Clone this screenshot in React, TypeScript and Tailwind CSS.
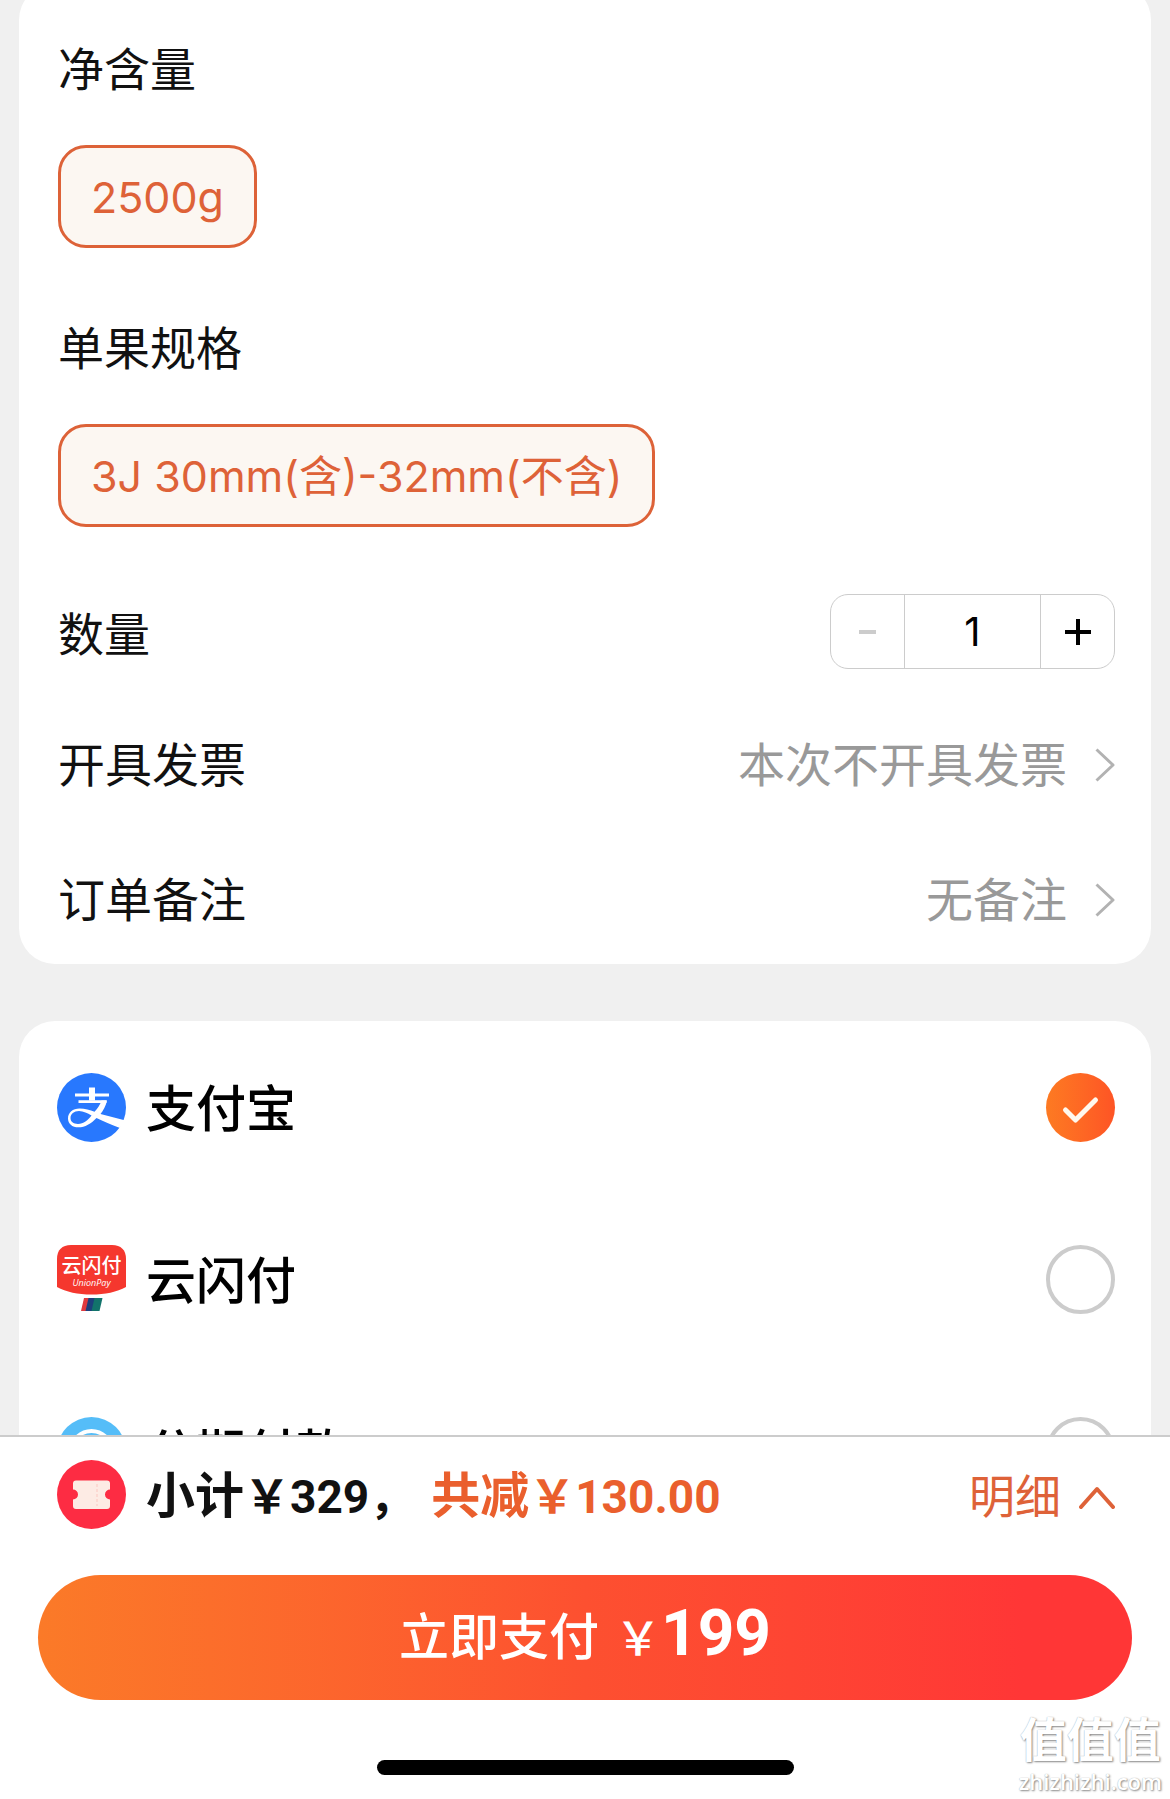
import { useState } from 'react';

const FONT = "font-[Inter,'Noto_Sans_CJK_SC',sans-serif]";
const PRICE_FONT = "font-[Roboto,'Noto_Sans_CJK_SC',sans-serif]";

function AlipayLogo() {
  return (
    <svg viewBox="0 0 69 69" className="size-[69px] shrink-0" aria-hidden="true">
      <circle cx="34.5" cy="34.5" r="34.5" fill="#2878fe" />
      <path d="M32 14.5h6v13h-6z" fill="#fff" />
      <path d="M18 20.6h34v3H18zM21.5 27.2h28v2.8h-28z" fill="#fff" />
      <path
        d="M44.5 27.5h5.500C48.800 33 46.300 37.500 43.500 41L68.500 47.500 63 55C54 51.500 46.500 48.500 39.500 45 34 50.800 28 54.300 21.500 54.300c-6.500 0-10.500-3.600-10.500-8.800 0-6 4.800-10 11.500-10 5.500 0 10.500 1.500 15 3.300C40.500 35.500 43.300 31.500 44.500 27.500zM34.500 42.500C30.500 40.300 26.500 38 22 38c-5 0-8.500 3-8.500 7 0 3.500 2.800 5.900 7.500 5.900 5.500 0 10-3.600 13.500-8.400z"
        fill="#fff"
      />
    </svg>
  );
}

function UnionPayLogo() {
  return (
    <svg viewBox="0 0 69 69" className="size-[69px] shrink-0" aria-hidden="true">
      <path d="M14 0h41c9 0 14 5 14 14v28c-9 5-21 7.500-34.500 7.500S9 47 0 42V14C0 5 5 0 14 0z" fill="#f5372e" />
      <text x="34.5" y="28" textAnchor="middle" fontSize="20" fill="#fff" fontFamily="Noto Sans CJK SC, sans-serif">
        云闪付
      </text>
      <text x="34.5" y="41" textAnchor="middle" fontSize="9" fontStyle="italic" fill="#fff" fontFamily="Open Sans, sans-serif">
        UnionPay
      </text>
      <path d="M27 53h7l-3 13h-7z" fill="#e0393e" />
      <path d="M31.5 53h8l-3 13h-8z" fill="#1d3f7c" />
      <path d="M37.5 53h8l-3 13h-8z" fill="#12736b" />
    </svg>
  );
}

function InstallmentLogo() {
  return (
    <svg viewBox="0 0 69 69" className="size-[69px] shrink-0" aria-hidden="true">
      <circle cx="34.5" cy="34.5" r="34.5" fill="#55bdf8" />
      <circle cx="34.5" cy="34.5" r="20.5" fill="none" stroke="#fff" strokeWidth="4" />
    </svg>
  );
}

function CouponLogo() {
  return (
    <svg viewBox="0 0 69 69" className="size-[69px] shrink-0" aria-hidden="true">
      <circle cx="34.5" cy="34.5" r="34.5" fill="#fd2c43" />
      <path
        d="M19 20.5h31a3 3 0 0 1 3 3v6a5 5 0 0 0 0 10v6.500a3 3 0 0 1-3 3H19a3 3 0 0 1-3-3v-6.500a5 5 0 0 0 0-10v-6a3 3 0 0 1 3-3z"
        fill="#fdebe4"
      />
      <path d="M40 24v22" stroke="#fbd3cc" strokeWidth="1.5" strokeDasharray="3 2" />
    </svg>
  );
}

function ChevronRight() {
  return (
    <svg viewBox="0 0 20 34" className="h-[34px] w-5" fill="none" stroke="#b2b2b2" strokeWidth="3" aria-hidden="true">
      <path d="M1.5 1.5 18 17 1.5 32.5" strokeLinejoin="round" />
    </svg>
  );
}

function Chip({ label }: { label: string }) {
  return (
    <button
      type="button"
      aria-pressed="true"
      className="h-[103px] rounded-[28px] border-3 border-[#dd6238] bg-[#fcf7f2] px-[30px] text-[43px] leading-[60px] text-[#de6238]"
    >
      {label}
    </button>
  );
}

function LinkRow({ label, value }: { label: string; value: string }) {
  return (
    <button type="button" className="flex w-full items-center justify-between text-[47px] leading-[60px]">
      <span>{label}</span>
      <span className="flex items-center gap-7 text-[#999]">
        {value}
        <ChevronRight />
      </span>
    </button>
  );
}

const methods = [
  { id: 'alipay', name: '支付宝', logo: <AlipayLogo /> },
  { id: 'unionpay', name: '云闪付', logo: <UnionPayLogo /> },
  { id: 'installment', name: '分期付款', logo: <InstallmentLogo /> },
];

export default function App() {
  const [count, setCount] = useState(1);
  const [method, setMethod] = useState('alipay');

  return (
    <div className={`flex h-screen flex-col bg-[#f0f0f0] text-[#111] ${FONT}`}>
      <main className="min-h-0 flex-1 overflow-hidden">
        {/* Product options */}
        <section className="mx-[19px] -mt-4 flex flex-col rounded-[36px] bg-white pt-[55px] pr-9 pb-[34px] pl-[39px]">
          <h2 className="text-[46px] leading-[60px]">净含量</h2>
          <div className="mt-[46px]">
            <Chip label="2500g" />
          </div>

          <h2 className="mt-[70px] text-[46px] leading-[60px]">单果规格</h2>
          <div className="mt-[46px]">
            <Chip label="3J 30mm(含)-32mm(不含)" />
          </div>

          <div className="mt-[67px] flex items-center justify-between">
            <label htmlFor="count" className="pt-1 text-[46px] leading-[60px]">数量</label>
            <div className="flex h-[75px] w-[285px] overflow-hidden rounded-[18px] border border-[#ccc]">
              <button
                type="button"
                aria-label="减少"
                className="flex w-[73px] items-center justify-center"
                onClick={() => setCount(Math.max(1, count - 1))}
              >
                <span className="h-1 w-[17px] bg-[#ccc]" />
              </button>
              <input
                id="count"
                value={count}
                onChange={(e) => setCount(Number(e.target.value) || 1)}
                className="min-w-0 flex-1 border-x border-[#ccc] text-center text-[40px] text-black outline-none"
              />
              <button
                type="button"
                aria-label="增加"
                className="flex w-[73px] items-center justify-center"
                onClick={() => setCount(count + 1)}
              >
                <svg viewBox="0 0 26 26" className="size-[26px]" stroke="#000" strokeWidth="4" aria-hidden="true">
                  <path d="M13 0v26M0 13h26" />
                </svg>
              </button>
            </div>
          </div>

          <div className="mt-[66px] flex flex-col gap-[75px]">
            <LinkRow label="开具发票" value="本次不开具发票" />
            <LinkRow label="订单备注" value="无备注" />
          </div>
        </section>

        {/* Payment methods */}
        <section className="mx-[19px] mt-[57px] flex flex-col gap-[103px] rounded-[36px] bg-white pt-[52px] pr-9 pb-[52px] pl-[38px]">
          {methods.map((m) => (
            <label key={m.id} className="flex h-[69px] items-center gap-5 text-[50px] leading-[69px] font-medium text-black">
              {m.logo}
              <span className="flex-1 pt-1">{m.name}</span>
              <span className="relative size-[69px]">
                <input
                  type="radio"
                  name="method"
                  checked={method === m.id}
                  onChange={() => setMethod(m.id)}
                  className="peer block size-[69px] appearance-none rounded-full border-4 border-[#ccc] checked:border-0 checked:bg-linear-to-r checked:from-[#fd7a22] checked:to-[#fe5425]"
                />
                <svg
                  viewBox="0 0 69 69"
                  className="pointer-events-none absolute inset-0 hidden peer-checked:block"
                  fill="none"
                  stroke="#fff8ee"
                  strokeWidth="5"
                  strokeLinecap="round"
                  strokeLinejoin="round"
                  aria-hidden="true"
                >
                  <path d="M19.5 37 29.5 47 49.5 27" />
                </svg>
              </span>
            </label>
          ))}
        </section>
      </main>

      {/* Checkout bar */}
      <footer className="relative border-t-2 border-[#ccc] bg-white px-[38px] pt-[23px] pb-6">
        <div className="flex h-[69px] items-center pr-[17px] pl-[19px]">
          <CouponLogo />
          <p className={`ml-5 pt-1 text-[49px] leading-[69px] font-bold ${PRICE_FONT}`}>
            小计<span className="text-[46px]">{'\uFFE5329\uFF0C'}</span>
          </p>
          <p className={`ml-4 flex-1 pt-1 text-[49px] leading-[69px] font-bold text-[#ea5f2d] ${PRICE_FONT}`}>
            共减<span className="text-[46px]">{'\uFFE5130.00'}</span>
          </p>
          <button type="button" className="flex items-center gap-[18px] pt-1 text-[46px] leading-[69px] text-[#de6238]">
            明细
            <svg viewBox="0 0 36 24" className="h-6 w-9" fill="none" stroke="#de6238" strokeWidth="4" aria-hidden="true">
              <path d="M2 22 18 4l16 18" strokeLinecap="round" strokeLinejoin="round" />
            </svg>
          </button>
        </div>

        <button
          type="button"
          className={`mt-[46px] flex h-[125px] w-full items-baseline justify-center rounded-full bg-linear-to-r from-[#fb7a28] via-[#fd5030] via-50% to-[#ff3636] to-90% text-white ${PRICE_FONT}`}
        >
          <span className="text-[50px] leading-[127px] font-medium">立即支付</span>
          <span className="ml-4 text-[46px] font-medium">{'\uFFE5'}</span>
          <span className="text-[64px] font-bold">199</span>
        </button>

        <div className="mx-auto mt-[60px] h-[15px] w-[417px] rounded-full bg-black" />

        {/* Site mark */}
        <div className="absolute right-2 bottom-1 text-center text-white [text-shadow:1px_1px_2px_#888,0_0_1px_#aaa]">
          <p className="text-[47px] leading-[54px] font-bold">值值值</p>
          <p className="font-['Open_Sans',sans-serif] text-[22px] leading-[28px] font-semibold">zhizhizhi.com</p>
        </div>
      </footer>
    </div>
  );
}
